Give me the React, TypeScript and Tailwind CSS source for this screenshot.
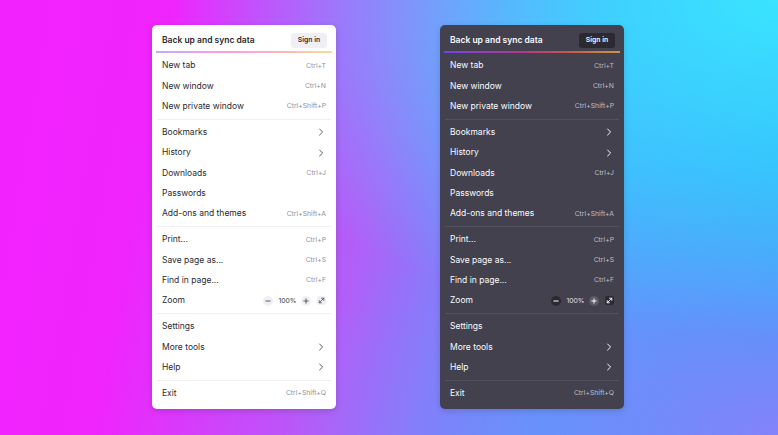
import React from 'react';

type Item =
  | { kind: 'row'; label: string; shortcut?: string; arrow?: boolean; zoom?: boolean }
  | { kind: 'sep' };

const items: Item[] = [
  { kind: 'row', label: 'New tab', shortcut: 'Ctrl+T' },
  { kind: 'row', label: 'New window', shortcut: 'Ctrl+N' },
  { kind: 'row', label: 'New private window', shortcut: 'Ctrl+Shift+P' },
  { kind: 'sep' },
  { kind: 'row', label: 'Bookmarks', arrow: true },
  { kind: 'row', label: 'History', arrow: true },
  { kind: 'row', label: 'Downloads', shortcut: 'Ctrl+J' },
  { kind: 'row', label: 'Passwords' },
  { kind: 'row', label: 'Add-ons and themes', shortcut: 'Ctrl+Shift+A' },
  { kind: 'sep' },
  { kind: 'row', label: 'Print...', shortcut: 'Ctrl+P' },
  { kind: 'row', label: 'Save page as...', shortcut: 'Ctrl+S' },
  { kind: 'row', label: 'Find in page...', shortcut: 'Ctrl+F' },
  { kind: 'row', label: 'Zoom', zoom: true },
  { kind: 'sep' },
  { kind: 'row', label: 'Settings' },
  { kind: 'row', label: 'More tools', arrow: true },
  { kind: 'row', label: 'Help', arrow: true },
  { kind: 'sep' },
  { kind: 'row', label: 'Exit', shortcut: 'Ctrl+Shift+Q' },
];

function Chevron({ dark }: { dark: boolean }) {
  return (
    <svg width="10" height="10" viewBox="0 0 10 10" fill="none">
      <path
        d="M3.6 2 L6.6 5 L3.6 8"
        stroke={dark ? '#fbfbfe' : '#5b5b66'}
        strokeWidth="1"
        strokeLinecap="round"
        strokeLinejoin="round"
      />
    </svg>
  );
}

function ZoomControls({ dark }: { dark: boolean }) {
  const btn = dark ? 'bg-[#5b5b66]' : 'bg-[#f0f0f4]';
  const stroke = dark ? '#fbfbfe' : '#5b5b66';
  return (
    <div className="flex items-center">
      <span className={`flex h-[10px] w-[10px] items-center justify-center rounded-full ${dark ? 'bg-[#2b2a33]' : btn}`}>
        <svg width="6" height="6" viewBox="0 0 6 6">
          <path d="M0.8 3 H5.2" stroke={stroke} strokeWidth="1" strokeLinecap="round" />
        </svg>
      </span>
      <span className={`ml-[5px] w-[19px] text-center text-[6.8px] ${dark ? 'text-[#e0e0e6]' : 'text-[#3b3a42]'}`}>
        100%
      </span>
      <span className={`ml-[4px] flex h-[10px] w-[10px] items-center justify-center rounded-full ${btn}`}>
        <svg width="6" height="6" viewBox="0 0 6 6">
          <path d="M0.8 3 H5.2 M3 0.8 V5.2" stroke={stroke} strokeWidth="1" strokeLinecap="round" />
        </svg>
      </span>
      <span className={`ml-[6px] flex h-[9px] w-[9px] items-center justify-center rounded-[2px] ${dark ? 'bg-[#2b2a33]' : 'bg-[#f0f0f4]'}`}>
        <svg width="7" height="7" viewBox="0 0 7 7" fill="none">
          <path
            d="M1.2 5.8 L5.8 1.2 M3.6 1.2 H5.8 V3.4 M1.2 3.6 V5.8 H3.4"
            stroke={stroke}
            strokeWidth="0.9"
            strokeLinecap="round"
            strokeLinejoin="round"
          />
        </svg>
      </span>
    </div>
  );
}

function Menu({ dark }: { dark: boolean }) {
  return (
    <div
      className={`w-[184px] rounded-[5px] px-1 pt-1 pb-[5px] shadow-[0_2px_6px_rgba(0,0,0,0.15)] ${
        dark ? 'bg-[#42414d] text-[#fbfbfe]' : 'bg-white text-[#2b2a33]'
      }`}
    >
      <div className="flex h-[22px] items-center justify-between pl-[6px] pr-[5px]">
        <span className="text-[8.5px] font-semibold">Back up and sync data</span>
        <span
          className={`flex h-[15px] w-[36px] items-center justify-center rounded-[3px] text-[6.8px] font-semibold ${
            dark ? 'bg-[#2b2a33] text-[#fbfbfe]' : 'bg-[#f0f0f4] text-[#2b2a33]'
          }`}
        >
          Sign in
        </span>
      </div>
      <div
        className={`h-[1.5px] ${
          dark
            ? 'bg-[linear-gradient(90deg,#7542e5_0%,#b13a8f_45%,#c5564d_70%,#c99a3f_100%)]'
            : 'bg-[linear-gradient(90deg,#c4a8ff_0%,#ff9ee0_45%,#ffb3b8_70%,#ffd89a_100%)]'
        }`}
      />
      <div className="mt-[3.2px]">
        {items.map((it, i) =>
          it.kind === 'sep' ? (
            <div key={i} className={`mx-px my-[2.3px] h-px ${dark ? 'bg-[#52525e]' : 'bg-[#f0f0f4]'}`} />
          ) : (
            <div key={i} className="flex h-[20.35px] items-center justify-between px-[6px]">
              <span className="text-[8.5px]">{it.label}</span>
              {it.shortcut && (
                <span className={`text-[6.8px] ${dark ? 'text-[#bfbfc9]' : 'text-[#8f8f9d]'}`}>{it.shortcut}</span>
              )}
              {it.arrow && <Chevron dark={dark} />}
              {it.zoom && <ZoomControls dark={dark} />}
            </div>
          )
        )}
      </div>
    </div>
  );
}

export default function App() {
  return (
    <div
      className="flex h-[435px] w-[778px] items-start gap-[104px] overflow-hidden pt-[25px] pl-[152px] antialiased bg-[radial-gradient(ellipse_at_100%_0%,#3ae3ff_0%,rgba(58,227,255,0)_55%),radial-gradient(ellipse_at_100%_100%,#8482fa_0%,rgba(132,130,250,0)_45%),linear-gradient(100deg,#f222ff_0%,#f024fd_20%,#b060f8_47%,#4aa2fd_72%,#2ba8fa_100%)]"
      style={{ fontFamily: 'Inter, "Noto Sans", sans-serif' }}
    >
      <Menu dark={false} />
      <Menu dark />
    </div>
  );
}
